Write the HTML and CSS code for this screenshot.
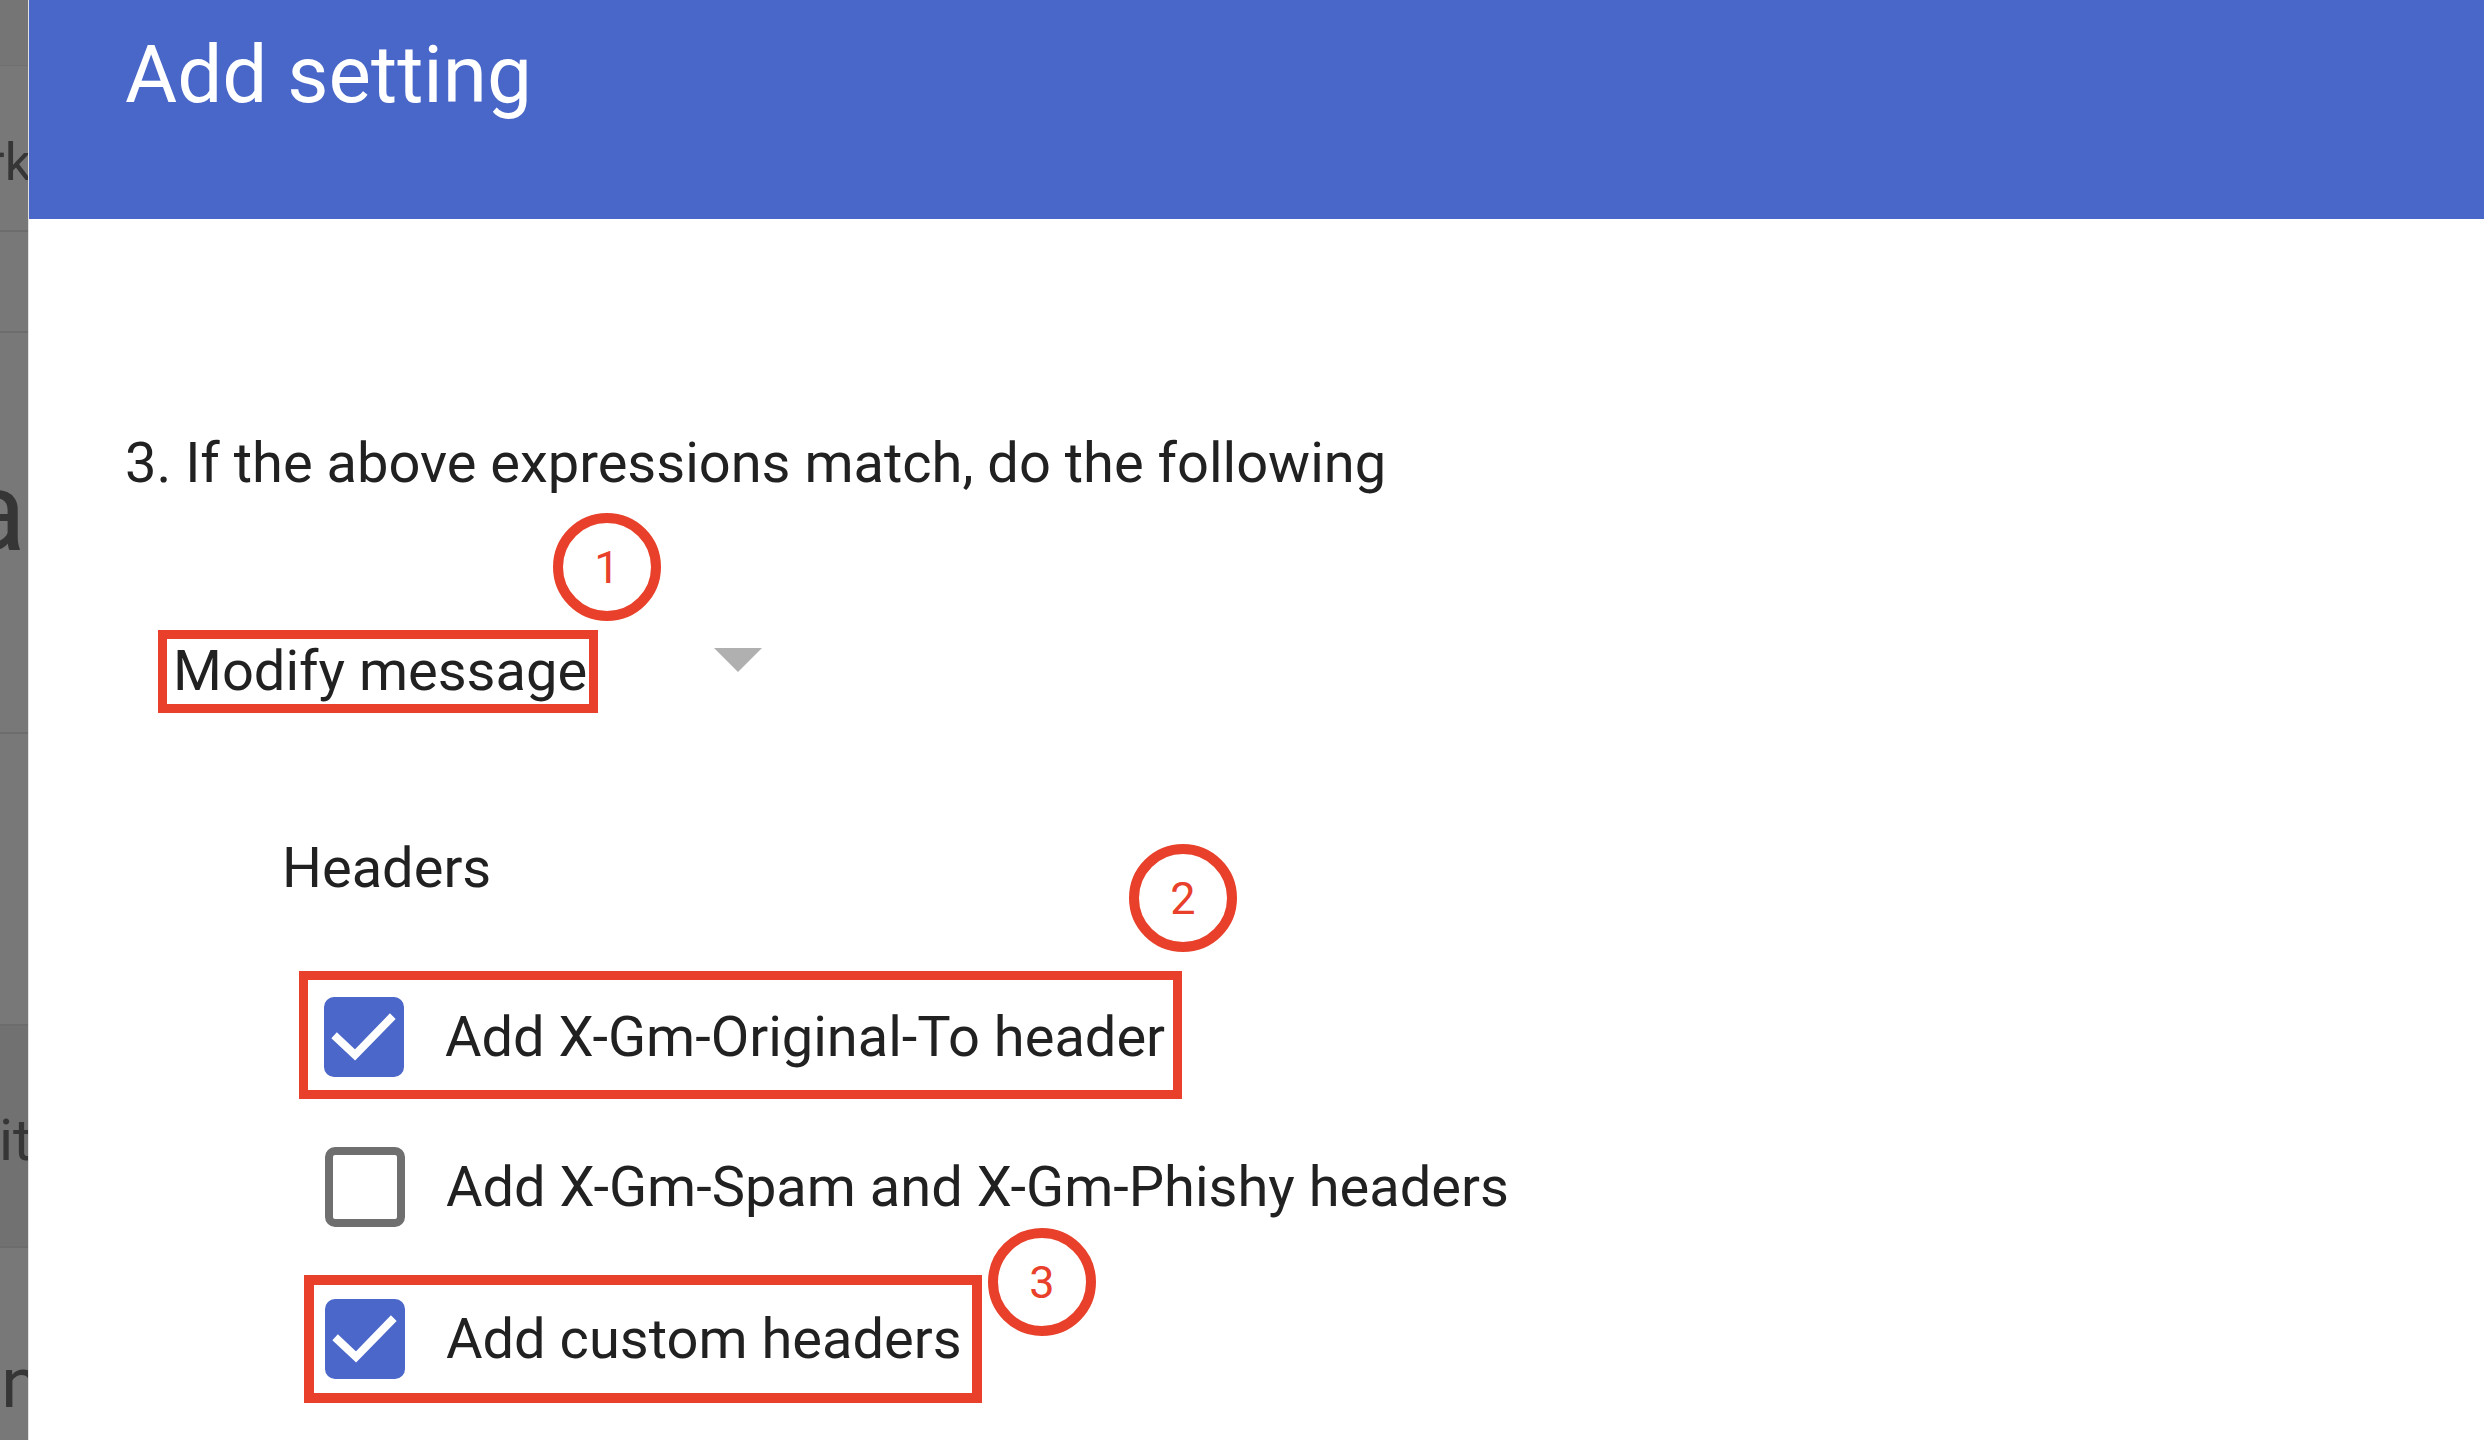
FILE: index.html
```html
<!DOCTYPE html>
<html lang="en">
<head>
<meta charset="utf-8">
<title>Add setting</title>
<link rel="stylesheet" href="styles.css">
</head>
<body>
<div class="page">
  <aside class="backdrop">
    <div class="bd-row bd-top"></div>
    <div class="bd-row bd-r1"><span class="bd-text t1">Network</span></div>
    <div class="bd-row bd-r2"></div>
    <div class="bd-row bd-r3"><span class="bd-text t2">Data</span></div>
    <div class="bd-row bd-r4"></div>
    <div class="bd-row bd-r5"><span class="bd-text t3">Edit</span></div>
    <div class="bd-row bd-r6"><span class="bd-text t4">Domain</span></div>
  </aside>
  <main class="dialog">
    <header class="dialog-header">
      <h1 class="dialog-title">Add setting</h1>
    </header>
    <section class="dialog-body">
      <p class="step-title">3. If the above expressions match, do the following</p>
      <div class="select-row">
        <div class="select-box marked">
          <span class="select-value">Modify message</span>
          <span class="badge badge-1">1</span>
        </div>
        <span class="select-arrow"></span>
      </div>
      <p class="group-title">Headers</p>
      <ul class="options">
        <li class="opt marked opt-1">
          <span class="checkbox checked">
            <svg viewBox="0 0 80 80" width="80" height="80"><polyline points="13,41 31,58 66,22" fill="none" stroke="#fff" stroke-width="8" stroke-linecap="square"/></svg>
          </span>
          <span class="opt-label">Add X-Gm-Original-To header</span>
          <span class="badge badge-2">2</span>
        </li>
        <li class="opt">
          <span class="checkbox"></span>
          <span class="opt-label">Add X-Gm-Spam and X-Gm-Phishy headers</span>
        </li>
        <li class="opt marked opt-3">
          <span class="checkbox checked">
            <svg viewBox="0 0 80 80" width="80" height="80"><polyline points="13,41 31,58 66,22" fill="none" stroke="#fff" stroke-width="8" stroke-linecap="square"/></svg>
          </span>
          <span class="opt-label">Add custom headers</span>
          <span class="badge badge-3">3</span>
        </li>
      </ul>
    </section>
  </main>
</div>
</body>
</html>
```
FILE: styles.css
```css
* { box-sizing: border-box; }
html, body {
  margin: 0;
  padding: 0;
  width: 2484px;
  height: 1440px;
  overflow: hidden;
  background: #fff;
  font-family: Roboto, "Liberation Sans", Arial, sans-serif;
  color: #212121;
}
.page {
  display: flex;
  width: 2484px;
  height: 1440px;
}

/* dimmed page behind the dialog */
.backdrop {
  width: 28px;
  flex: none;
  background: #787878;
  display: flex;
  flex-direction: column;
  overflow: hidden;
}
.bd-row {
  display: flex;
  justify-content: flex-end;
  overflow: hidden;
  border-bottom: 2px solid #6c6c6c;
  color: #363636;
  white-space: nowrap;
}
.bd-top { height: 66px; background: #757575; border-bottom: 1px solid #707070; }
.bd-r1 { height: 166px; align-items: flex-start; }
.bd-r2 { height: 101px; }
.bd-r3 { height: 401px; align-items: flex-start; }
.bd-r4 { height: 292px; }
.bd-r5 { height: 222px; background: #717171; align-items: flex-start; }
.bd-r6 { flex: 1; border-bottom: 0; align-items: flex-start; }
.bd-text { line-height: 1; }
.t1 { font-size: 52px; margin-top: 71px; margin-right: -3px; }
.t2 { font-size: 112px; margin-top: 123px; margin-right: 2px; }
.t3 { font-size: 58px; margin-top: 85px; margin-right: -4px; }
.t4 { font-size: 70px; margin-top: 100px; margin-right: -12px; }

/* dialog */
.dialog {
  flex: 1;
  border-left: 1px solid #e2e2e2;
  background: #fff;
  display: flex;
  flex-direction: column;
}
.dialog-header {
  height: 219px;
  background: #4967c9;
  padding: 35px 0 0 96px;
  flex: none;
}
.dialog-title {
  margin: 0;
  font-size: 80px;
  font-weight: 400;
  line-height: 1;
  color: #fff;
}
.dialog-body {
  padding: 0 0 0 96px;
}
.step-title {
  margin: 217px 0 0 0;
  font-size: 56px;
  line-height: 55px;
}

.select-row {
  display: flex;
  align-items: flex-start;
  margin-top: 139px;
  margin-left: 33px;
}
.marked {
  position: relative;
  border: 9px solid #e8402a;
}
.select-box {
  height: 83px;
  padding: 4px 2px 0 6px;
}
.select-value {
  display: block;
  font-size: 56px;
  line-height: 56px;
  white-space: nowrap;
}
.select-arrow {
  margin: 18px 0 0 116px;
  width: 0;
  height: 0;
  border-left: 24px solid transparent;
  border-right: 24px solid transparent;
  border-top: 24px solid #b0b0b0;
}

.group-title {
  margin: 128px 0 0 157px;
  font-size: 56px;
  line-height: 55px;
}

.options {
  list-style: none;
  margin: 75px 0 0 200px;
  padding: 0;
  display: flex;
  flex-direction: column;
  align-items: flex-start;
  gap: 24px;
}
.opt {
  height: 128px;
  display: flex;
  align-items: center;
  gap: 41px;
}
.opt.marked { padding: 3px 8px 0 16px; margin-left: -26px; }
.opt-3.marked { border-width: 10px; padding: 0 10px 0 11px; margin-left: -21px; }
.checkbox {
  width: 80px;
  height: 80px;
  flex: none;
  border: 8px solid #6f6f6f;
  border-radius: 10px;
  background: #fff;
}
.checkbox.checked {
  border: 0;
  background: #4a67c9;
}
.checkbox svg { display: block; }
.opt-label {
  font-size: 56px;
  line-height: 56px;
  white-space: nowrap;
}

/* numbered annotation circles */
.badge {
  position: absolute;
  width: 108px;
  height: 108px;
  border: 10px solid #e8402a;
  border-radius: 50%;
  display: flex;
  align-items: center;
  justify-content: center;
  color: #e8402a;
  font-size: 45px;
  line-height: 1;
  background: transparent;
}
.badge-1 { left: 386px; top: -126px; }
.badge-2 { left: 821px; top: -136px; }
.badge-3 { left: 674px; top: -57px; }
```
